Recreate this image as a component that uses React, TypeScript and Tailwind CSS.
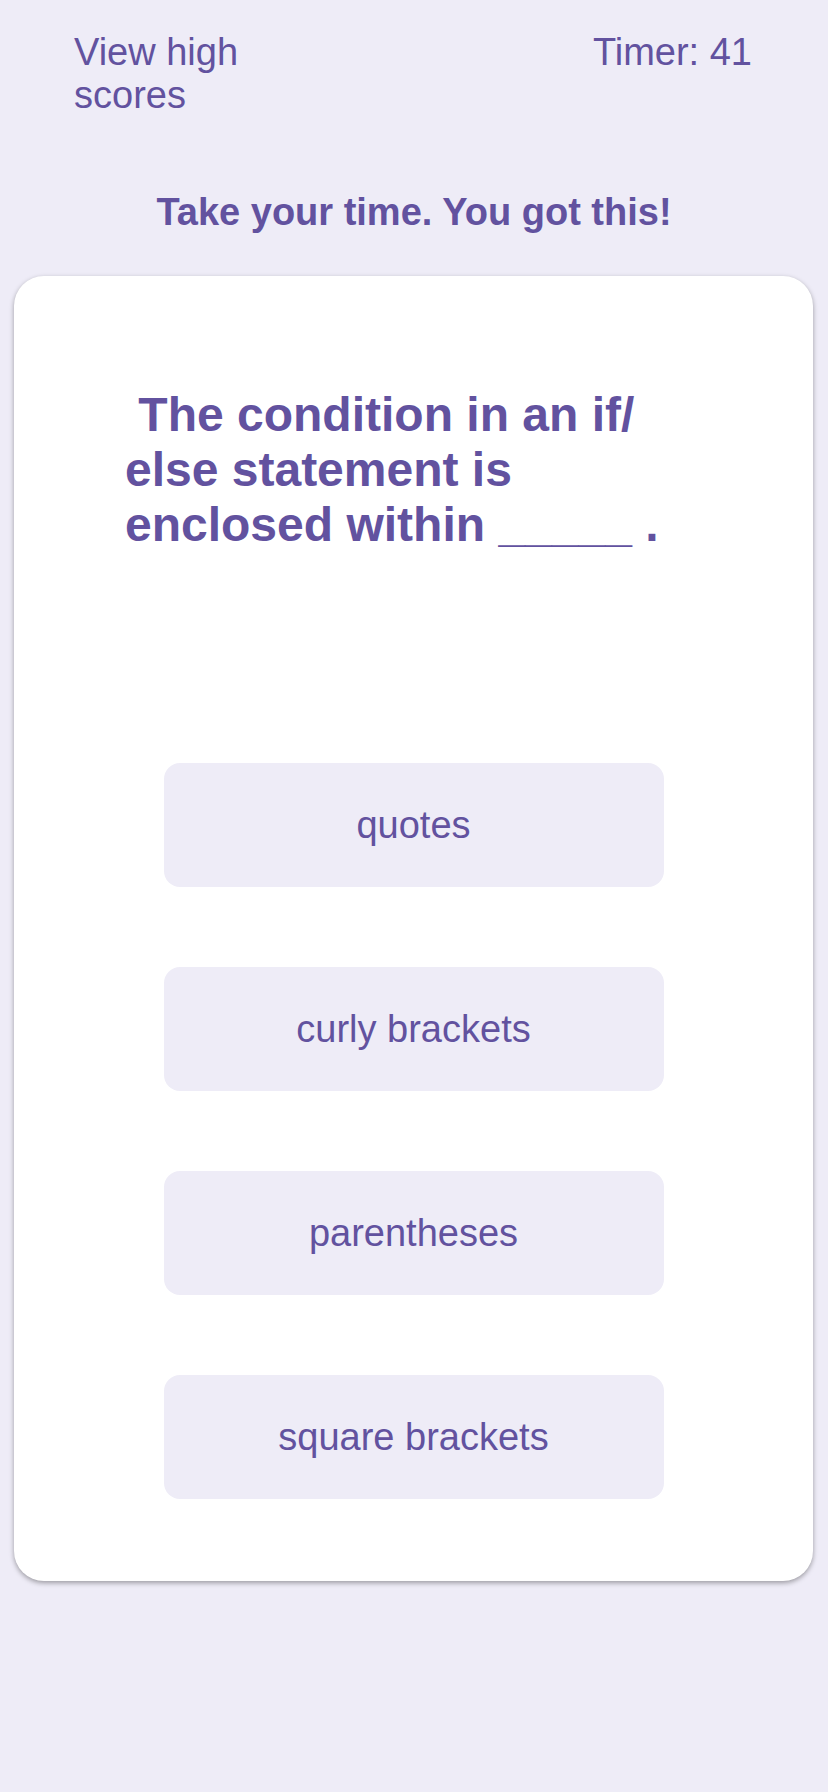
const answers = ["quotes", "curly brackets", "parentheses", "square brackets"];

export default function App() {
  return (
    <div
      className="min-h-[1792px] bg-[#eeecf7] text-[#62529f]"
      style={{ fontFamily: '"Liberation Sans", Arial, sans-serif' }}
    >
      <header className="flex items-start justify-between pl-[74px] pr-[76px] pt-[31px]">
        <a href="#" className="w-[200px] text-[38px] leading-[42.5px]">
          View high scores
        </a>
        <div className="text-[38px] leading-[42.5px]">Timer: 41</div>
      </header>

      <p className="mt-[75px] text-center text-[38px] font-bold leading-[43.7px]">
        Take your time. You got this!
      </p>

      <main className="mx-[14px] mr-[15px] mt-[41px] flex flex-col rounded-[30px] bg-white px-[111px] pb-[82px] pt-[111px] shadow-[0_2px_5px_rgba(0,0,0,0.35)]">
        <h1 className="text-[48px] font-bold leading-[55.2px]">
          {"\u00a0"}The condition in an if/
          <wbr />
          else statement is enclosed within _____ .
        </h1>

        <div className="mt-[211px] flex flex-col items-center gap-[80px]">
          {answers.map((answer) => (
            <button
              key={answer}
              className="flex h-[124px] w-[500px] items-center justify-center rounded-[16px] bg-[#eeecf7] text-[38px] text-[#62529f]"
            >
              {answer}
            </button>
          ))}
        </div>
      </main>
    </div>
  );
}
